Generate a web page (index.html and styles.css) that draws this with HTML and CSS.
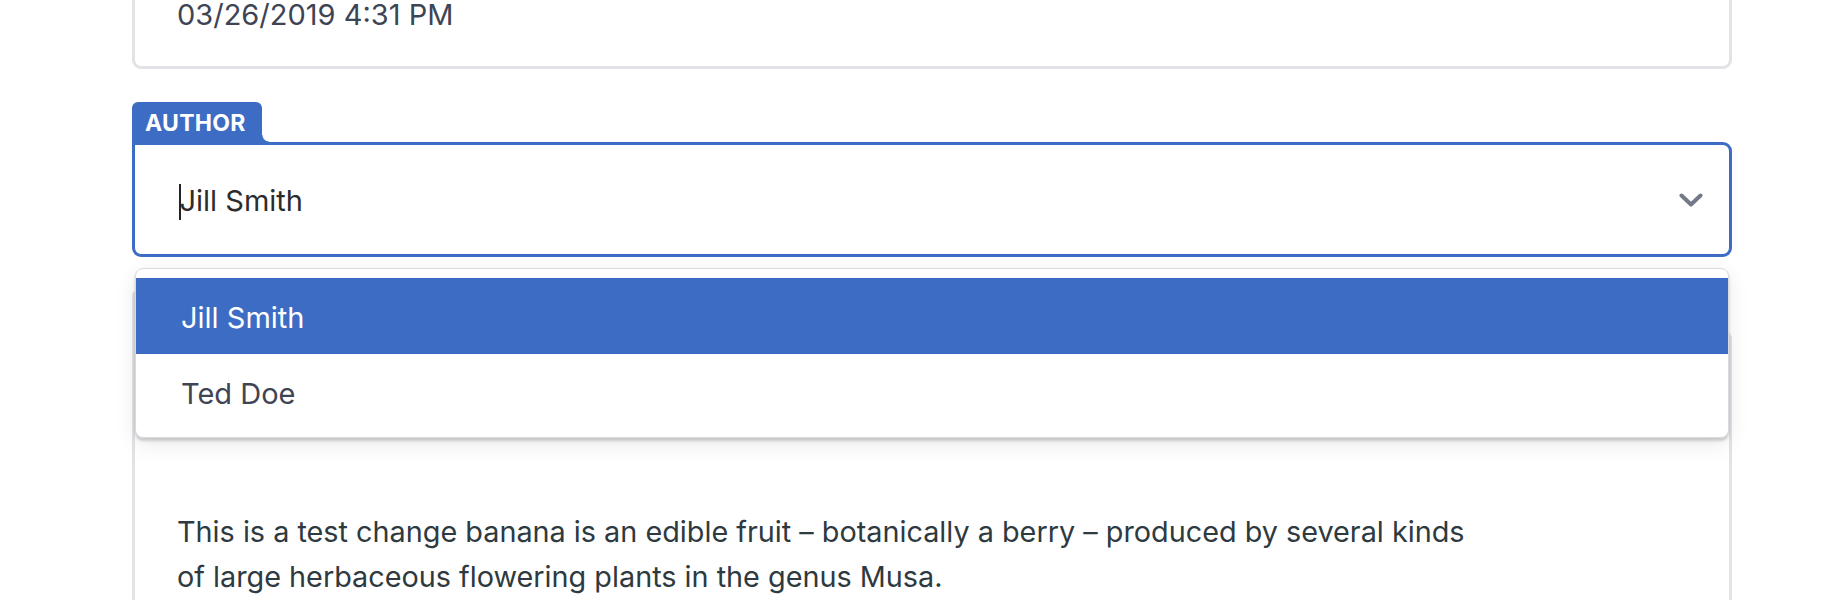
FILE: index.html
```html
<!DOCTYPE html>
<html lang="en">
<head>
<meta charset="utf-8">
<title>Edit entry</title>
<link rel="stylesheet" href="styles.css">
</head>
<body>
<main class="page">
  <section class="card card-top">
    <div class="value">03/26/2019 4:31 PM</div>
  </section>

  <section class="field">
    <div class="tab tab-active">AUTHOR</div>
    <div class="select">
      <span class="caret"></span>
      <span class="select-value">Jill Smith</span>
      <svg class="chevron" width="24" height="15" viewBox="0 0 24 15" aria-hidden="true">
        <polyline points="2.5,2.5 12,11.5 21.5,2.5" fill="none" stroke="#737987" stroke-width="4" stroke-linecap="round" stroke-linejoin="round"/>
      </svg>
    </div>
    <ul class="menu">
      <li class="option option-active">Jill Smith</li>
      <li class="option">Ted Doe</li>
    </ul>
  </section>

  <section class="field">
    <div class="tab tab-muted"></div>
    <div class="card card-body">
      <p class="text">This is a test change banana is an edible fruit – botanically a berry – produced by several kinds of large herbaceous flowering plants in the genus Musa.</p>
    </div>
  </section>
</main>
</body>
</html>
```

FILE: styles.css
```css
* {
  box-sizing: border-box;
}

html, body {
  margin: 0;
  padding: 0;
  background: #ffffff;
  overflow: hidden;
}

body {
  font-family: Inter, "Noto Sans", "Liberation Sans", sans-serif;
  color: #3c4352;
}

.page {
  width: 1600px;
  margin-left: 132px;
  display: flex;
  flex-direction: column;
}

.card {
  border: 3px solid #e2e2e7;
  background: #ffffff;
}

.card-top {
  margin-top: -43px;
  border-radius: 0 0 9px 9px;
  padding: 40px 40px 37px 42px;
}

.value {
  font-size: 29px;
  line-height: 29px;
  color: #3d4453;
}

.field {
  position: relative;
  margin-top: 33px;
  display: flex;
  flex-direction: column;
}

.tab {
  position: relative;
  align-self: flex-start;
  height: 40px;
  padding: 0 12px 0 13px;
  border-radius: 6px 6px 0 0;
  font-size: 23px;
  font-weight: 700;
  line-height: 42px;
  letter-spacing: 0.3px;
  color: #ffffff;
}

.tab::after {
  content: "";
  position: absolute;
  left: 100%;
  bottom: 0;
  width: 7px;
  height: 7px;
}

.tab-active {
  width: 130px;
  background: #3d6cc4;
}

.tab-active::after {
  background: radial-gradient(circle at 100% 0, rgba(61, 108, 196, 0) 6px, #3d6cc4 7px);
}

.tab-muted {
  width: 130px;
  background: #e2e2e7;
}

.tab-muted::after {
  background: radial-gradient(circle at 100% 0, rgba(226, 226, 231, 0) 6px, #e2e2e7 7px);
}

.select {
  height: 115px;
  border: 3px solid #3d6cc4;
  border-radius: 0 9px 9px 9px;
  display: flex;
  align-items: center;
  padding: 0 26px 0 44px;
  background: #ffffff;
}

.caret {
  width: 1.5px;
  height: 36px;
  background: #222;
  margin-right: -1px;
  margin-top: 4px;
}

.select-value {
  flex: 1;
  font-size: 29px;
  color: #2c2c2e;
  padding-top: 2px;
}

.chevron {
  display: block;
  margin-top: 2px;
}

.menu {
  position: absolute;
  z-index: 2;
  top: 166px;
  left: 3px;
  right: 3px;
  margin: 0;
  padding: 9px 0 7px;
  list-style: none;
  background: #ffffff;
  border: 1px solid #dadadf;
  border-radius: 8px;
  box-shadow: 0 3px 3px rgba(0, 0, 0, 0.17), 0 6px 22px rgba(0, 0, 0, 0.09);
}

.option {
  height: 76px;
  display: flex;
  align-items: center;
  padding: 2px 0 0 45px;
  font-size: 29px;
  color: #3f4555;
}

.option-active {
  background: #3d6cc4;
  color: #ffffff;
}

.card-body {
  border-radius: 0 9px 9px 9px;
  padding: 176px 40px 40px 42px;
  min-height: 400px;
}

.text {
  margin: 0;
  max-width: 1312px;
  font-size: 28.8px;
  line-height: 45px;
  color: #2e3a40;
}
```
